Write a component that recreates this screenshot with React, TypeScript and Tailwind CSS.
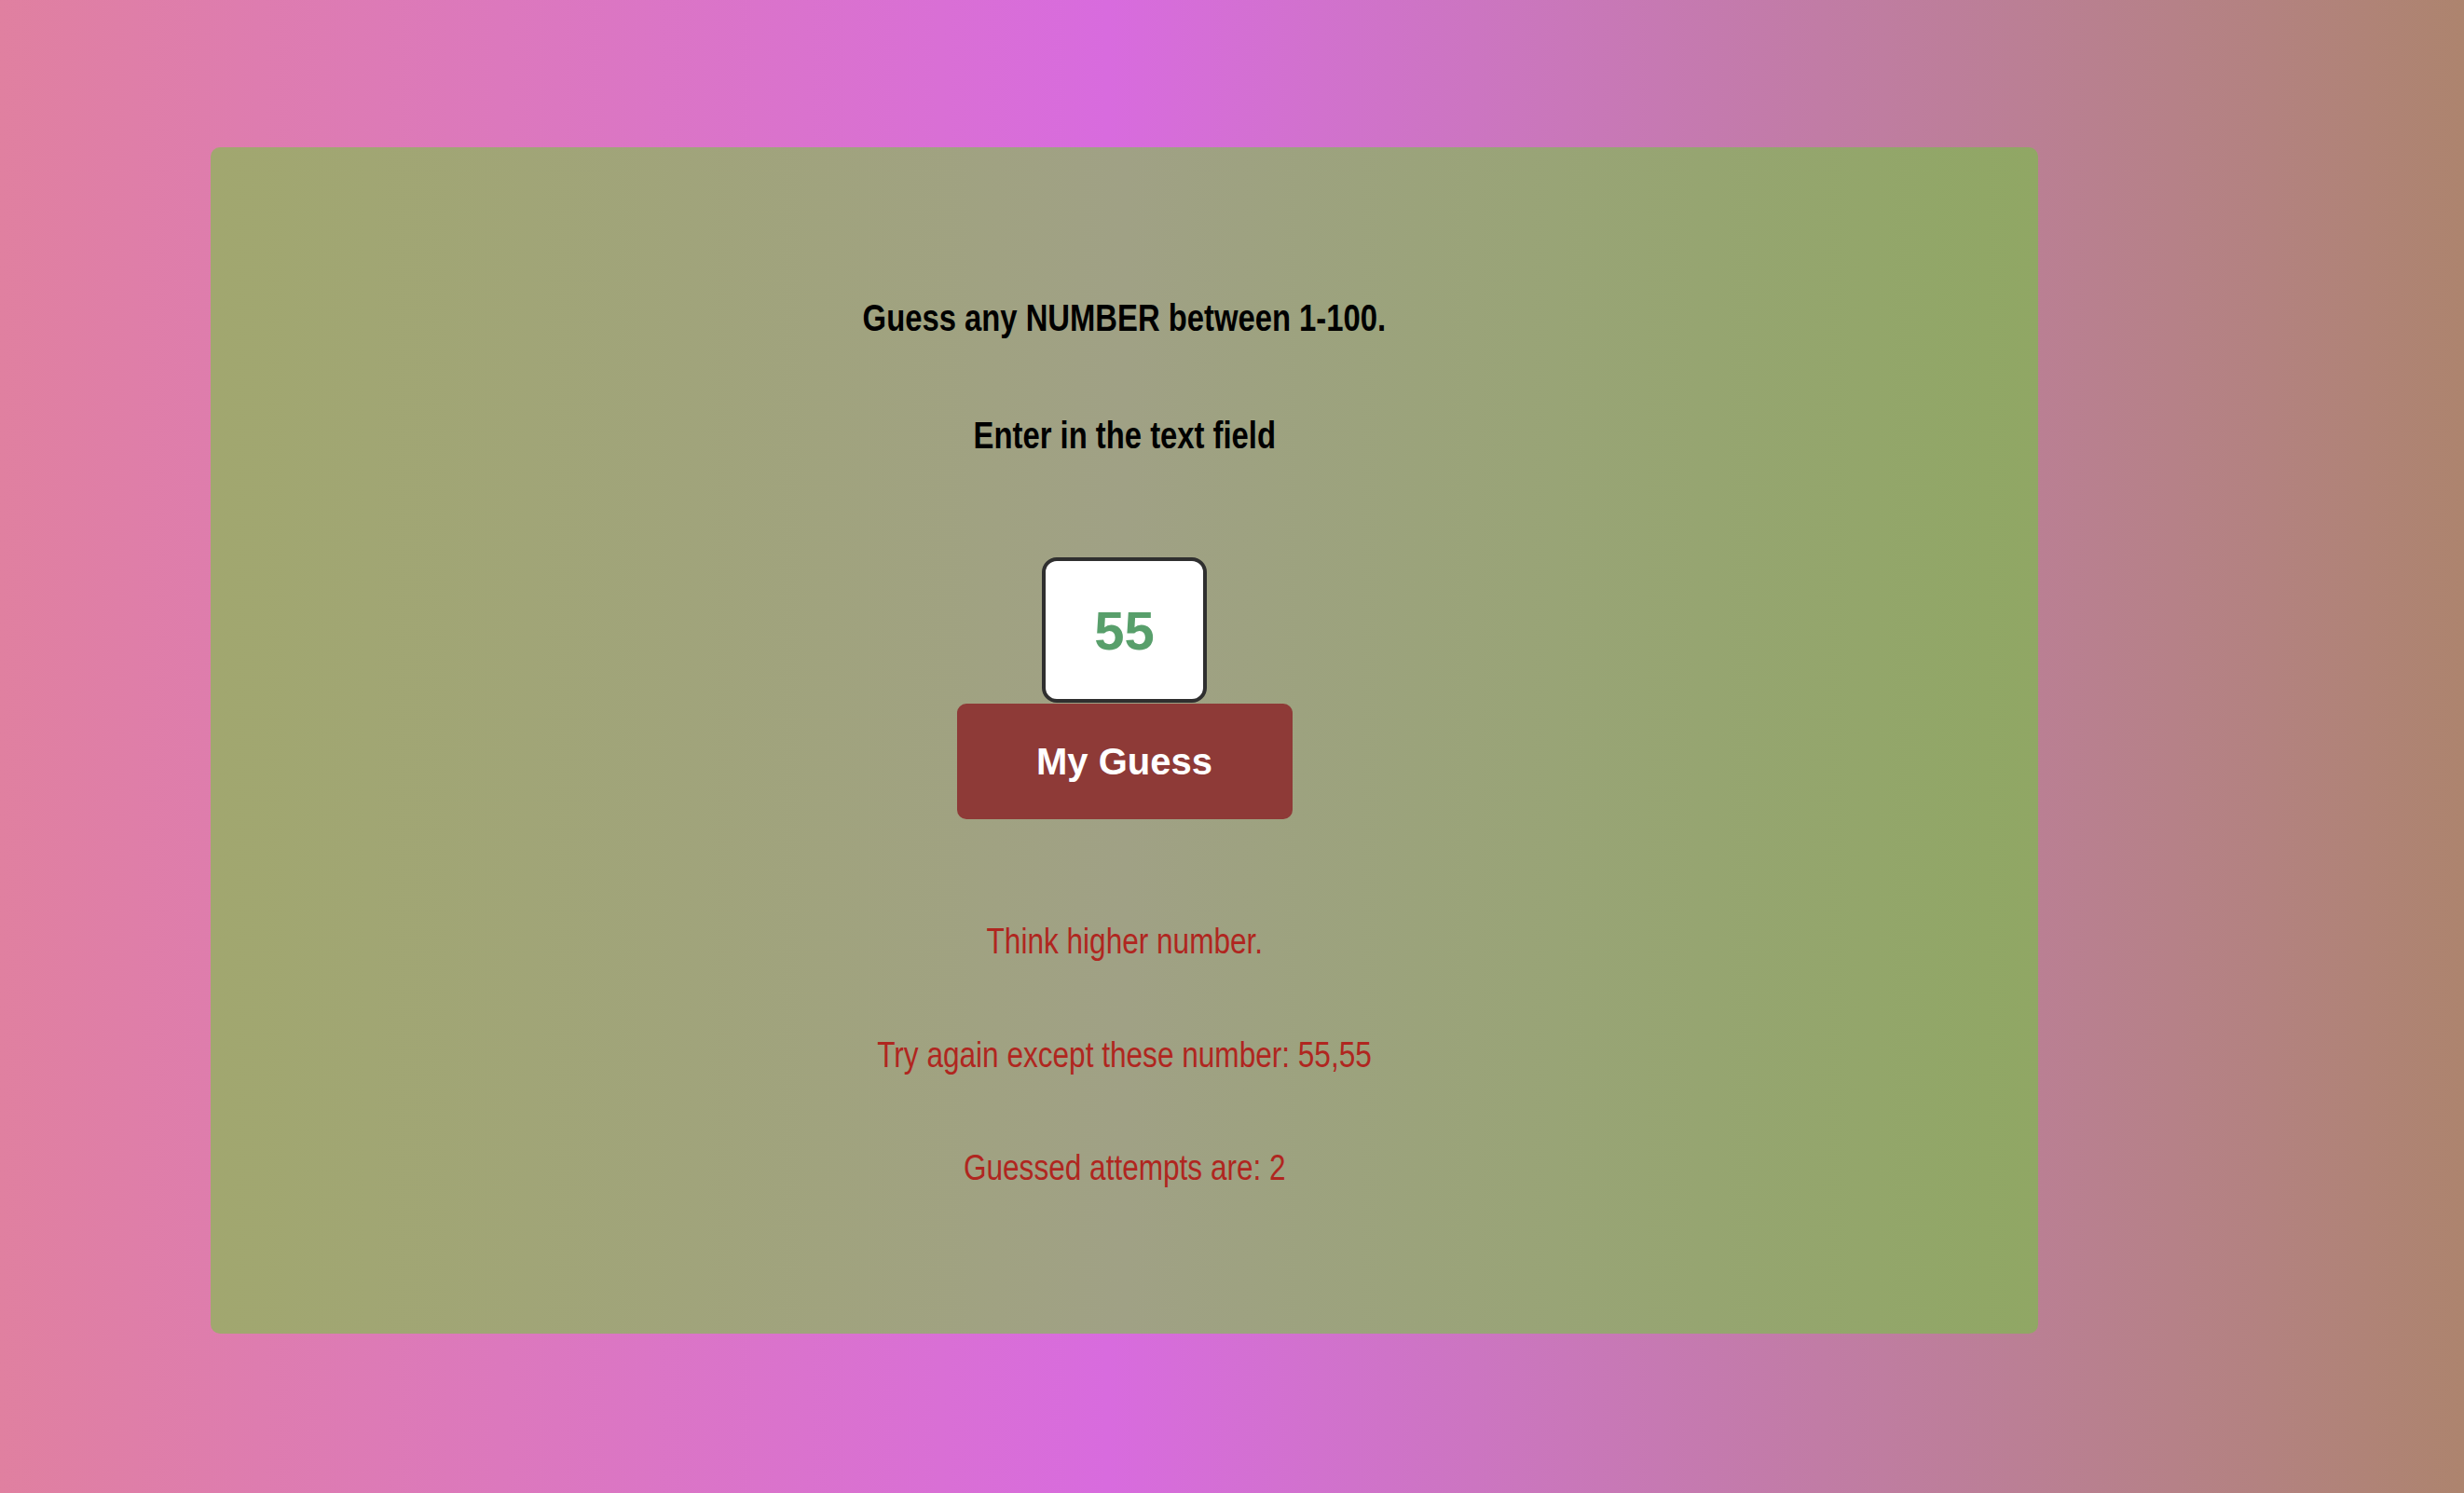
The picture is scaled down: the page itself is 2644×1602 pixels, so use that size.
import { useState } from "react";

// no narrow font installed, so squeeze Liberation Sans to Arial Narrow width
const narrow = "inline-block scale-x-[0.82] font-['Liberation_Sans',Arial,sans-serif]";

const App = () => {
  const [guess, setGuess] = useState("55");
  const tried = ["55", "55"];

  return (
    <div className="min-h-screen w-full bg-linear-to-r from-[#e080a0] via-[#d86bde] via-45% to-[#ad846e] pt-[158px] pl-[226px] pb-[171px]">
      <div className="w-[1961px] h-[1273px] rounded-[10px] bg-linear-to-r from-[#a1a76f] via-[#a0a185] via-50% to-[#90a764] flex flex-col items-center pt-[158px]">
        <h1 className="text-[40px] leading-[48px] font-bold text-black">
          <span className={narrow}>Guess any NUMBER between 1-100.</span>
        </h1>
        <h2 className="text-[40px] leading-[48px] font-bold text-black mt-[77px]">
          <span className={narrow}>Enter in the text field</span>
        </h2>
        <input
          type="text"
          value={guess}
          onChange={(e) => setGuess(e.target.value)}
          className="mt-[107px] w-[177px] h-[156px] bg-white border-[4px] border-[#2f2f2f] rounded-[16px] text-center font-['Liberation_Sans',Arial,sans-serif] font-bold text-[58px] text-[#589f6b] outline-none"
        />
        <button className="mt-px w-[360px] h-[124px] rounded-[10px] bg-[#8e3a37] text-white font-['Liberation_Sans',Arial,sans-serif] font-bold text-[40px]">
          My Guess
        </button>
        <p className="text-[38.5px] leading-[46px] text-[#b0261f] mt-[106px]">
          <span className={narrow}>Think higher number.</span>
        </p>
        <p className="text-[38.5px] leading-[46px] text-[#b0261f] mt-[74px]">
          <span className={narrow}>Try again except these number: {tried.join(",")}</span>
        </p>
        <p className="text-[38.5px] leading-[46px] text-[#b0261f] mt-[73px]">
          <span className={narrow}>Guessed attempts are: {tried.length}</span>
        </p>
      </div>
    </div>
  );
};

export default App;
